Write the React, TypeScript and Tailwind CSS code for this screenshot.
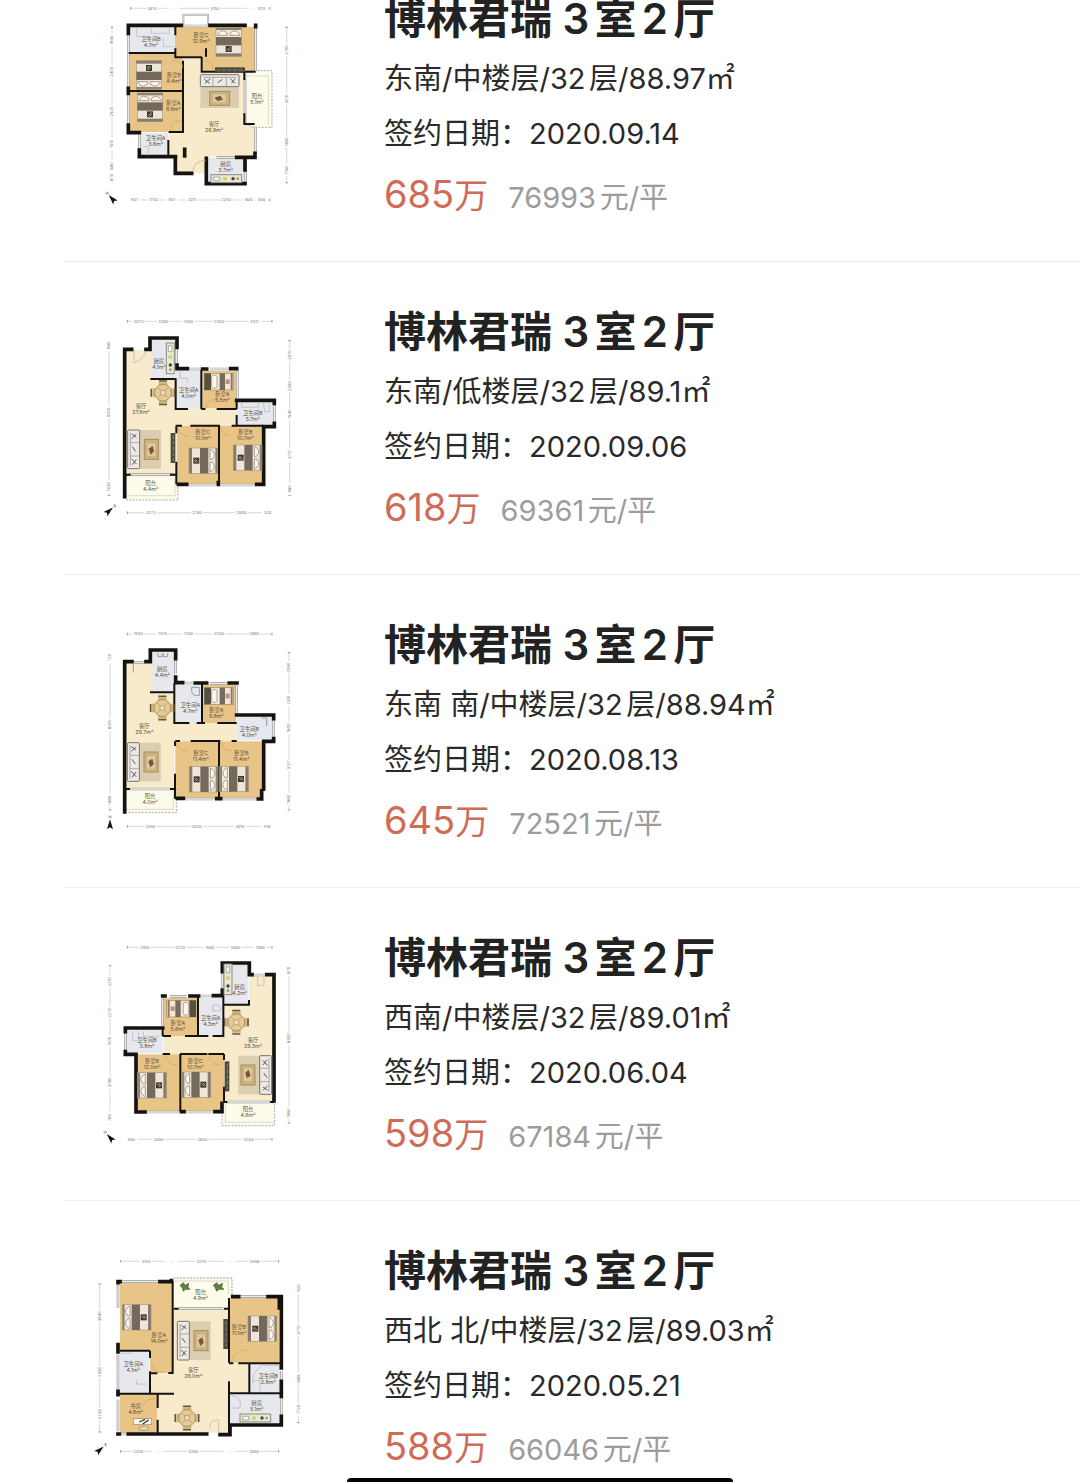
import type { ReactNode } from "react"

type Point = [number, number]

const WOOD = "#e8c487"
const CREAM = "#f8ebcb"
const TILE = "#e6e8ee"
const BALCONY = "#fdfcea"
const WALL = "#15130f"

function Area({ points, fill }: { points: string; fill: string }) {
  return <polygon points={points} fill={fill} />
}

function Walls({ thick, thin, windows }: { thick: string; thin: string; windows: string }) {
  return (
    <g fill="none">
      <path d={windows} stroke="#9a9a98" strokeWidth="8" />
      <path d={windows} stroke="#e9e9ec" strokeWidth="4" />
      <path d={thin} stroke={WALL} strokeWidth="6" />
      <path d={thick} stroke={WALL} strokeWidth="11" strokeLinecap="square" />
    </g>
  )
}

// head of the bed points up at rotate 0
function Bed({ at, rotate = 0 }: { at: Point; rotate?: number }) {
  return (
    <g transform={`translate(${at[0]} ${at[1]}) rotate(${rotate})`}>
      <rect x="-38" y="-43" width="76" height="86" fill="#efe6da" stroke="#a89878" strokeWidth="2" />
      <path d="M-38 -43H38V-36H-38Z" fill="#8d8371" />
      <path d="M-32 -24Q-20 -42 -4 -26L-4 -20H-34ZM32 -24Q20 -42 4 -26L4 -20H34Z" fill="#fbf8f2" stroke="#7d7464" strokeWidth="2" />
      <rect x="-38" y="-15" width="76" height="25" fill="#75695c" />
      <rect x="-38" y="34" width="76" height="9" fill="#887c6d" />
      <rect x="-9" y="12" width="18" height="18" fill="#3b3631" />
      <path d="M-5 24L5 15M-2 27L6 21" stroke="#e8dfd4" strokeWidth="2" />
    </g>
  )
}

function SingleBed({ at, rotate = 0 }: { at: Point; rotate?: number }) {
  return (
    <g transform={`translate(${at[0]} ${at[1]}) rotate(${rotate})`}>
      <rect x="-25" y="-44" width="50" height="88" fill="#f0e6da" stroke="#a08c68" strokeWidth="2" />
      <rect x="-25" y="-44" width="50" height="20" fill="#57503f" />
      <rect x="-19" y="-22" width="38" height="16" rx="5" fill="#fbf7ef" stroke="#8f8573" strokeWidth="2" />
      <rect x="-25" y="2" width="50" height="16" fill="#77695c" />
      <rect x="-7" y="20" width="14" height="12" fill="#b98f80" />
      <rect x="-25" y="35" width="50" height="6" fill="#8d7a64" />
    </g>
  )
}

// sofa with rug and coffee table; sofa sits on the left at rotate 0
function Lounge({ at, rotate = 0 }: { at: Point; rotate?: number }) {
  return (
    <g transform={`translate(${at[0]} ${at[1]}) rotate(${rotate})`}>
      <rect x="-40" y="-58" width="90" height="116" fill="#dacdb0" />
      <rect x="-50" y="-58" width="36" height="116" rx="3" fill="#ece9e6" stroke="#77736c" strokeWidth="3" />
      <path d="M-42 -50V50M-42 -20H-16M-42 20H-16" stroke="#8d8983" strokeWidth="2" />
      <path d="M-38 -46L-24 -36M-24 -46L-38 -32M-36 -8L-26 6M-38 28L-24 44M-24 30L-36 46" stroke="#5d5a56" strokeWidth="3" />
      <rect x="0" y="-30" width="42" height="60" fill="#cbb27f" stroke="#a78d5c" strokeWidth="3" />
      <rect x="9" y="-18" width="24" height="38" fill="#dcc9a3" />
      <path d="M13 -2L25 -10L29 6L19 16Z" fill="#7b5237" />
    </g>
  )
}

function Dining({ at }: { at: Point }) {
  return (
    <g transform={`translate(${at[0]} ${at[1]})`}>
      <path d="M-12 -35H12M-12 35H12M-35 -12V12M35 -12V12" stroke="#5f5440" strokeWidth="5" />
      <path d="M-13 -27H13M-13 27H13M-27 -13V13M27 -13V13" stroke="#cfb27c" strokeWidth="9" />
      <circle r="25" fill="#e6cb98" stroke="#b2945d" strokeWidth="3" />
      <path d="M-15 -15L15 15M15 -15L-15 15" stroke="#a98f60" strokeWidth="2" />
      <circle r="8" fill="#efdcb4" stroke="#a98b57" strokeWidth="2" />
    </g>
  )
}

function Stove({ at, rotate = 0 }: { at: Point; rotate?: number }) {
  return (
    <g transform={`translate(${at[0]} ${at[1]}) rotate(${rotate})`}>
      <rect x="-46" y="-12" width="92" height="24" fill="#e9e8d2" stroke="#8b8b80" strokeWidth="3" />
      <path d="M-38 -5H-20V6H-38Z" fill="#f7f7f2" stroke="#8b8b80" strokeWidth="2" />
      <circle cx="-4" cy="0" r="6" fill="#d3cf6a" />
      <circle cx="20" cy="0" r="5" fill="#3f4437" />
      <circle cx="34" cy="0" r="4" fill="#94978a" />
    </g>
  )
}

function Tv({ at, rotate = 0 }: { at: Point; rotate?: number }) {
  return (
    <g transform={`translate(${at[0]} ${at[1]}) rotate(${rotate})`}>
      <rect x="-7" y="-45" width="14" height="90" fill="#4b493d" />
      <path d="M1 -38V38" stroke="#8b8877" strokeWidth="3" strokeDasharray="12 5" />
    </g>
  )
}

function Label({ at, name, size }: { at: Point; name: string; size: string }) {
  return (
    <text textAnchor="middle" fontSize="16" fill="#5a5040">
      <tspan x={at[0]} y={at[1]}>{name}</tspan>
      <tspan x={at[0]} y={at[1] + 18}>{size}</tspan>
    </text>
  )
}

function Dimensions({ y, from, to, marks }: { y: number; from: number; to: number; marks: [number, string][] }) {
  return (
    <g>
      <path d={`M${from} ${y}H${to}`} stroke="#c4c4c4" strokeWidth="2" />
      <path d={`M${from} ${y - 4}V${y + 4}M${to} ${y - 4}V${y + 4}`} stroke="#999" strokeWidth="3" />
      {marks.map(([x, label]) => (
        <g key={x}>
          <rect x={x - 18} y={y - 6} width="36" height="12" fill="#fff" />
          <text x={x} y={y + 4} textAnchor="middle" fontSize="12" fill="#777">{label}</text>
        </g>
      ))}
    </g>
  )
}

function SideDimensions({ x, from, to, marks }: { x: number; from: number; to: number; marks: [number, string][] }) {
  return (
    <g transform={`translate(${x} 0) rotate(-90)`}>
      <Dimensions y={0} from={-to} to={-from} marks={marks.map(([y, label]) => [-y, label])} />
    </g>
  )
}

// arrow points up at rotate 0
function Compass({ at, rotate }: { at: Point; rotate: number }) {
  return (
    <g transform={`translate(${at[0]} ${at[1]}) rotate(${rotate})`}>
      <path d="M0 -16L9 14L0 8L-9 14Z" fill={WALL} />
      <path d="M-3 -20V-27L3 -20V-27" stroke="#777" strokeWidth="2" fill="none" />
    </g>
  )
}

function Plan({ title, top, children }: { title: string; top: number; children: ReactNode }) {
  return (
    <svg
      role="img"
      aria-label={title}
      viewBox={`0 ${top} 660 660`}
      className="mt-12 h-[220px] w-[220px] shrink-0 [text-autospace:no-autospace]"
    >
      {children}
    </svg>
  )
}

function PlanA() {
  return (
    <Plan title="户型图" top={-9}>
      <Area points="240,172 335,172 335,218 465,218 465,372 497,378 497,470 350,470 350,520 258,520 258,470 235,470" fill={CREAM} />
      <Area points="255,80 497,80 497,215 337,215 337,170 255,170" fill={WOOD} />
      <Area points="116,162 278,162 278,396 116,396" fill={WOOD} />
      <Area points="118,80 255,80 255,157 118,157" fill={TILE} />
      <Area points="148,398 234,398 234,468 148,468" fill={TILE} />
      <Area points="355,473 467,473 467,550 355,550" fill={TILE} />
      <path d="M467 218V212H546V382H490L467 372Z" fill={BALCONY} stroke="#aaa" strokeWidth="3" strokeDasharray="6 4" />
      <path d="M467 228H535V374" fill="none" stroke="#c9c9c3" strokeWidth="2" />
      <path d="M280 76V44H354V76" fill="none" stroke="#aaa" strokeWidth="6" />
      <path d="M280 76V44H354V76" fill="none" stroke="#eee" strokeWidth="2" />
      <Walls
        windows="M280 78H354M116 90V380M497 82V212M465 235V368M496 380V460M148 405V465M467 480V550M380 472H440"
        thin="M116 159H256M256 76V106M256 145V172H335M348 145V170M332 215H497M335 170V215M279 182V272M116 273H282M279 273V396M116 396H150M236 396H282M235 420V468M232 470H262M463 218V240M463 340V372H494"
        thick="M115 76H274M360 76H465M115 76V100M115 265V280M115 375V398H148M148 450V470H256V520H305M284 448V468M349 475V551H465M440 472H495V460M465 475V510M497 76V80"
      />
      <path d="M184 82V100H238V82M140 82V110H156M220 115V140H250M160 440H175V466" fill="none" stroke="#b3b6bf" strokeWidth="2" />
      <path d="M245 182Q280 180 278 205M345 180Q370 185 370 212M240 392Q245 360 275 362M308 512Q315 480 348 482" fill="none" stroke="#d0a35c" strokeWidth="2" />
      <Bed at={[416, 126]} />
      <Bed at={[177, 225]} rotate={180} />
      <Bed at={[180, 322]} />
      <Lounge at={[389, 274]} rotate={90} />
      <Tv at={[420, 209]} rotate={90} />
      <Stove at={[409, 536]} />
      <Label at={[183, 122]} name="卫生间B" size="4.7m²" />
      <Label at={[333, 112]} name="卧室C" size="12.9m²" />
      <Label at={[252, 232]} name="卧室B" size="8.4m²" />
      <Label at={[250, 314]} name="卧室A" size="8.6m²" />
      <Label at={[197, 421]} name="卫生间A" size="3.6m²" />
      <Label at={[372, 379]} name="客厅" size="26.9m²" />
      <Label at={[501, 293]} name="阳台" size="5.1m²" />
      <Label at={[407, 497]} name="厨房" size="3.7m²" />
      <Dimensions y={25} from={122} to={540} marks={[[186, "2870"], [250, "··"], [375, "5150"], [490, "··"], [515, "970"]]} />
      <Dimensions y={600} from={122} to={540} marks={[[133, "607"], [190, "1750"], [246, "957"], [306, "2011"], [408, "2250"], [476, "800"], [515, "850"]]} />
      <SideDimensions x={66} from={82} to={548} marks={[[120, "1640"], [215, "2400"], [335, "2520"], [432, "1510"], [498, "880"], [532, "870"]]} />
      <SideDimensions x={590} from={82} to={548} marks={[[150, "2700"], [297, "3210"], [425, "1850"], [510, "1180"]]} />
      <Compass at={[67, 597]} rotate={-42} />
    </Plan>
  )
}

function PlanB() {
  return (
    <Plan title="户型图" top={0}>
      <Area points="108,120 183,120 183,208 257,208 257,295 440,295 440,348 257,348 257,493 108,493" fill={CREAM} />
      <Area points="260,348 520,348 520,523 260,523" fill={WOOD} />
      <Area points="337,182 438,182 438,295 337,295" fill={WOOD} />
      <Area points="183,88 257,88 257,206 183,206" fill={TILE} />
      <Area points="258,180 334,180 334,295 258,295" fill={TILE} />
      <Area points="440,272 550,272 550,345 440,345" fill={TILE} />
      <path d="M108 497H264V570H108Z" fill={BALCONY} stroke="#aaa" strokeWidth="3" strokeDasharray="6 4" />
      <path d="M110 557H255V500" fill="none" stroke="#c9c9c3" strokeWidth="2" />
      <Walls
        windows="M260 115V165M296 177H334M442 180V265M553 280V340M295 525H378M392 525H495M115 494H250M360 177H415"
        thin="M181 207H257M257 205V297H294M334 180V297M334 297H346M380 297H440M440 270V297M257 347H276M301 347H390M425 347H440M259 348V370M259 455V523M387 347V523M108 494H122M240 494H257M437 347H520M440 315V345"
        thick="M104 560V118H125M168 118H180V84H261V112M261 165V176H292M338 177H350M422 176H440M440 271H553V280M553 340V350H521V523H500M385 523V518M265 523H290"
      />
      <path d="M132 120V158Q158 152 168 124M270 182V205H292V218M455 276V292H505V276M520 278H538V305H524Z" fill="none" stroke="#aeb0b6" strokeWidth="2" />
      <path d="M262 350Q268 378 298 378M392 350Q396 378 424 378M348 296Q350 270 376 268" fill="none" stroke="#d0a35c" strokeWidth="2" />
      <Dining at={[219, 248]} />
      <SingleBed at={[387, 215]} rotate={-90} />
      <Bed at={[340, 452]} rotate={90} />
      <Bed at={[473, 443]} rotate={90} />
      <Lounge at={[163, 418]} />
      <Tv at={[249, 414]} />
      <Stove at={[241, 145]} rotate={90} />
      <Label at={[207, 160]} name="厨房" size="4.1m²" />
      <Label at={[296, 246]} name="卫生间A" size="4.0m²" />
      <Label at={[397, 259]} name="卧室A" size="5.5m²" />
      <Label at={[488, 315]} name="卫生间B" size="3.7m²" />
      <Label at={[153, 295]} name="客厅" size="27.6m²" />
      <Label at={[338, 372]} name="卧室C" size="10.1m²" />
      <Label at={[466, 372]} name="卧室B" size="10.7m²" />
      <Label at={[182, 525]} name="阳台" size="4.4m²" />
      <Dimensions y={34} from={112} to={546} marks={[[146, "2073"], [220, "2385"], [296, "1600"], [387, "2350"], [494, "2617"]]} />
      <Dimensions y={608} from={112} to={546} marks={[[182, "3273"], [321, "2790"], [454, "2800"], [533, "520"]]} />
      <SideDimensions x={57} from={92} to={556} marks={[[106, "680"], [307, "6100"], [530, "1430"]]} />
      <SideDimensions x={599} from={92} to={556} marks={[[135, "2070"], [228, "2350"], [312, "1540"], [434, "3710"], [537, "480"]]} />
      <Compass at={[57, 603]} rotate={48} />
    </Plan>
  )
}

function PlanC() {
  return (
    <Plan title="户型图" top={3}>
      <Area points="108,122 183,122 183,212 253,212 253,303 440,303 440,357 253,357 253,500 108,500" fill={CREAM} />
      <Area points="256,358 518,358 518,530 256,530" fill={WOOD} />
      <Area points="339,188 438,188 438,303 339,303" fill={WOOD} />
      <Area points="183,88 255,88 255,210 183,210" fill={TILE} />
      <Area points="256,188 336,188 336,303 256,303" fill={TILE} />
      <Area points="440,282 550,282 550,355 440,355" fill={TILE} />
      <path d="M108 503H260V572H108Z" fill={BALCONY} stroke="#aaa" strokeWidth="3" strokeDasharray="6 4" />
      <path d="M110 562H250V505" fill="none" stroke="#c9c9c3" strokeWidth="2" />
      <Walls
        windows="M257 115V155M284 183H312M440 190V272M551 290V350M286 531H370M398 531H500M120 501H245M132 122H164M360 184H415"
        thin="M180 211H253M253 184V303H298M336 184V303M320 303H345M382 303H440M256 357H270M302 357H391M425 357H440M255 358V372M255 455V530M387 357V528M108 501H120M240 501H255"
        thick="M104 570V119H126M168 119H181V84H257V110M257 165V182H278M316 183H350M418 183H441M440 279H551V290M551 350V358H521V502L515 505V531H505M262 529H280M380 530H392"
      />
      <path d="M130 124V152M305 196H328V220H312L305 210ZM515 288H530V312M204 93V104H216V94M220 93V104H233V94" fill="none" stroke="#989aa2" strokeWidth="3" />
      <path d="M258 360Q264 386 296 386M392 360Q396 386 424 386" fill="none" stroke="#d0a35c" strokeWidth="2" />
      <Dining at={[217, 258]} />
      <SingleBed at={[387, 222]} rotate={-90} />
      <Bed at={[341, 472]} rotate={90} />
      <Bed at={[432, 471]} rotate={-90} />
      <Lounge at={[162, 420]} />
      <Label at={[217, 146]} name="厨房" size="4.4m²" />
      <Label at={[301, 254]} name="卫生间A" size="4.7m²" />
      <Label at={[379, 271]} name="卧室A" size="5.6m²" />
      <Label at={[478, 326]} name="卫生间B" size="4.0m²" />
      <Label at={[163, 317]} name="客厅" size="29.7m²" />
      <Label at={[332, 400]} name="卧室C" size="11.4m²" />
      <Label at={[454, 400]} name="卧室B" size="11.4m²" />
      <Label at={[180, 529]} name="阳台" size="4.0m²" />
      <Dimensions y={36} from={112} to={546} marks={[[145, "1640"], [218, "1570"], [295, "1780"], [387, "2250"], [493, "2890"]]} />
      <Dimensions y={613} from={112} to={546} marks={[[181, "3360"], [320, "3030"], [450, "3015"], [532, "610"]]} />
      <SideDimensions x={60} from={92} to={564} marks={[[106, "720"], [308, "8310"], [535, "1480"]]} />
      <SideDimensions x={597} from={92} to={564} marks={[[137, "2050"], [234, "2351"], [318, "1800"], [430, "3121"], [532, "1480"]]} />
      <Compass at={[60, 608]} rotate={0} />
    </Plan>
  )
}

function PlanD() {
  return (
    <Plan title="户型图" top={3}>
      <Area points="552,122 477,122 477,210 402,210 402,303 220,303 220,357 402,357 402,500 552,500" fill={CREAM} />
      <Area points="142,358 402,358 402,530 142,530" fill={WOOD} />
      <Area points="220,188 322,188 322,303 220,303" fill={WOOD} />
      <Area points="402,88 475,88 475,208 402,208" fill={TILE} />
      <Area points="325,188 400,188 400,303 325,303" fill={TILE} />
      <Area points="108,284 218,284 218,355 108,355" fill={TILE} />
      <path d="M396 503H554V572H396Z" fill={BALCONY} stroke="#aaa" strokeWidth="3" strokeDasharray="6 4" />
      <path d="M550 562H406V505" fill="none" stroke="#c9c9c3" strokeWidth="2" />
      <Walls
        windows="M398 115V160M333 183H362M217 190V272M106 290V350M170 531H270M286 531H370M412 501H540M490 120H522M240 184H290"
        thin="M400 209H477M477 195V212M400 184V303H368M324 184V303M285 303H355M218 303H243M218 303V280M218 357H240M355 357H402M270 357H352M402 357V375M271 357V530M402 455V500M402 501H412M540 501H552"
        thick="M552 498V119H530M486 119H478V84H397V110M397 165V182H370M326 183H300M225 183H218M218 279H106V290M106 350V358H138V500V531H165M275 530H282M375 530H396V505"
      />
      <path d="M503 124V152H522V124M368 210H384L392 222V228H368ZM128 290V316H145V290M160 288V304H208" fill="none" stroke="#aeb0b6" strokeWidth="2" />
      <path d="M226 360Q228 388 262 390M358 362Q360 388 392 390" fill="none" stroke="#d0a35c" strokeWidth="2" />
      <Dining at={[439, 262]} />
      <SingleBed at={[274, 221]} rotate={90} />
      <Bed at={[186, 451]} rotate={-90} />
      <Bed at={[319, 449]} rotate={-90} />
      <Lounge at={[495, 420]} rotate={180} />
      <Tv at={[411, 424]} />
      <Stove at={[414, 133]} rotate={90} />
      <Label at={[449, 161]} name="厨房" size="4.2m²" />
      <Label at={[362, 254]} name="卫生间A" size="4.3m²" />
      <Label at={[264, 271]} name="卧室A" size="5.6m²" />
      <Label at={[171, 321]} name="卫生间B" size="3.8m²" />
      <Label at={[489, 322]} name="客厅" size="29.3m²" />
      <Label at={[186, 384]} name="卧室B" size="12.0m²" />
      <Label at={[316, 384]} name="卧室C" size="10.7m²" />
      <Label at={[474, 529]} name="阳台" size="4.6m²" />
      <Dimensions y={37} from={112} to={546} marks={[[165, "2910"], [271, "2270"], [360, "1680"], [436, "1480"], [511, "1690"]]} />
      <Dimensions y={613} from={112} to={546} marks={[[124, "560"], [206, "2850"], [337, "2850"], [475, "3200"]]} />
      <SideDimensions x={60} from={92} to={564} marks={[[140, "2210"], [233, "2270"], [318, "1570"], [442, "3760"], [548, "760"]]} />
      <SideDimensions x={597} from={92} to={564} marks={[[106, "670"], [310, "8300"], [534, "1480"]]} />
      <Compass at={[61, 609]} rotate={-42} />
    </Plan>
  )
}

function PlanE() {
  return (
    <Plan title="户型图" top={3}>
      <Area points="180,180 418,180 418,345 480,345 480,435 418,435 418,555 204,555 204,438 180,438" fill={CREAM} />
      <Area points="90,103 247,103 247,375 180,375 180,308 90,308" fill={WOOD} />
      <Area points="418,150 567,150 567,344 418,344" fill={WOOD} />
      <Area points="90,438 202,438 202,556 90,556" fill={WOOD} />
      <Area points="90,310 178,310 178,435 90,435" fill={TILE} />
      <Area points="480,348 570,348 570,432 480,432" fill={TILE} />
      <Area points="420,438 572,438 572,528 420,528" fill={TILE} />
      <path d="M250 90H426V140L414 180H250Z" fill={BALCONY} />
      <path d="M250 90H426V140" fill="none" stroke="#999" strokeWidth="3" strokeDasharray="6 4" />
      <path d="M254 99H415V140" fill="none" stroke="#c9c9c3" strokeWidth="2" />
      <Walls
        windows="M94 101H206M84 110V180M84 320V440M84 455V550M450 146H530M574 370V395M574 450V500M266 182H400M92 558H112"
        thin="M248 98V375H235M90 308H180M180 308V330M180 370V435M180 376H202M84 437H252M203 437V480M203 515V556M252 182H266M402 182H418M417 150V344M417 346H430M445 346H572M478 348V434M417 400V555M417 436H572"
        thick="M84 101H90M210 101H244V98M84 101V104M84 290V312M84 430V440M84 558H88M115 558H350M390 560H420V531H574V505M428 146H446M534 146H574V360M568 150V180M574 400V445"
      />
      <path d="M140 395V408H170M92 316H125M490 410Q480 380 515 352H565M490 398H510V430M424 442Q458 448 450 480H422M360 540Q355 515 386 516V556" fill="none" stroke="#aeb0b6" strokeWidth="2" />
      <path d="M160 474Q165 450 200 452M184 340Q188 375 220 372M425 340Q428 310 470 305" fill="none" stroke="#d0a35c" strokeWidth="2" />
      <g fill="#64803f" stroke="#465e2a" strokeWidth="2">
        <path d="M270 112L280 104L286 112L296 106L294 118L300 124L286 124L280 130L277 120Z" />
        <path d="M370 112L380 104L386 112L398 106L395 118L402 124L387 124L380 130L376 120Z" />
      </g>
      <Bed at={[140, 208]} rotate={-90} />
      <Bed at={[517, 242]} rotate={90} />
      <Lounge at={[312, 278]} />
      <Tv at={[407, 258]} />
      <Dining at={[291, 510]} />
      <Stove at={[496, 510]} />
      <g>
        <rect x="130" y="512" width="55" height="18" fill="#f7f4ec" stroke="#9a8a66" strokeWidth="2" />
        <path d="M148 522L165 514M158 528L176 516" stroke="#3d3a35" strokeWidth="4" />
        <rect x="148" y="535" width="26" height="12" rx="4" fill="#ddd3bd" stroke="#9a8a66" strokeWidth="2" />
      </g>
      <Label at={[332, 137]} name="阳台" size="4.9m²" />
      <Label at={[207, 267]} name="卧室A" size="14.0m²" />
      <Label at={[447, 242]} name="卧室B" size="11.1m²" />
      <Label at={[130, 354]} name="卫生间A" size="4.1m²" />
      <Label at={[310, 371]} name="客厅" size="26.0m²" />
      <Label at={[535, 391]} name="卫生间B" size="2.8m²" />
      <Label at={[137, 480]} name="书房" size="4.8m²" />
      <Label at={[500, 472]} name="厨房" size="5.1m²" />
      <Dimensions y={40} from={92} to={566} marks={[[168, "3134"], [245, "··"], [333, "3270"], [418, "··"], [494, "2658"]]} />
      <Dimensions y={610} from={92} to={566} marks={[[145, "2200"], [203, "··"], [310, "4285"], [418, "··"], [492, "2860"]]} />
      <SideDimensions x={29} from={108} to={552} marks={[[205, "3940"], [372, "2430"], [498, "2230"]]} />
      <SideDimensions x={625} from={104} to={524} marks={[[120, "920"], [246, "3770"], [393, "1685"], [484, "1729"]]} />
      <Compass at={[29, 606]} rotate={48} />
    </Plan>
  )
}

interface Deal {
  plan: ReactNode
  info: string
  date: string
  total: string
  unit: string
}

const deals: Deal[] = [
  { plan: <PlanA />, info: "东南/中楼层/32层/88.97㎡", date: "2020.09.14", total: "685", unit: "76993元/平" },
  { plan: <PlanB />, info: "东南/低楼层/32层/89.1㎡", date: "2020.09.06", total: "618", unit: "69361元/平" },
  { plan: <PlanC />, info: "东南 南/中楼层/32层/88.94㎡", date: "2020.08.13", total: "645", unit: "72521元/平" },
  { plan: <PlanD />, info: "西南/中楼层/32层/89.01㎡", date: "2020.06.04", total: "598", unit: "67184元/平" },
  { plan: <PlanE />, info: "西北 北/中楼层/32层/89.03㎡", date: "2020.05.21", total: "588", unit: "66046元/平" },
]

function DealRow({ deal }: { deal: Deal }) {
  return (
    <li className="ml-16 flex gap-[74px] border-b border-[#eeeeee] pl-[26px]">
      {deal.plan}
      <div className="min-w-0 flex-1 whitespace-nowrap pt-[46px] pb-10">
        <h2 className="mb-2 text-[42px] leading-[48px] font-semibold text-[#222222]">博林君瑞 3室2厅</h2>
        <p className="text-[29px] leading-[55px] text-[#2a2a2a]">{deal.info}</p>
        <p className="text-[29px] leading-[55px] text-[#2a2a2a]">签约日期：{deal.date}</p>
        <p className="mt-2 flex h-[52px] items-baseline gap-5 leading-[50px]">
          <span className="text-[38px] text-[#cf6b56] [text-autospace:no-autospace]">
            {deal.total}
            <span className="text-[34px]">万</span>
          </span>
          <span className="text-[29px] text-[#9c9c9c]">{deal.unit}</span>
        </p>
      </div>
    </li>
  )
}

export default function App() {
  return (
    <main className="h-screen overflow-hidden bg-white font-['Inter','Noto_Sans_CJK_SC',sans-serif] [text-autospace:normal]">
      <ul className="-mt-[51px]">
        {deals.map((deal) => (
          <DealRow key={deal.date} deal={deal} />
        ))}
      </ul>
      <div className="fixed inset-x-0 bottom-0 flex justify-center">
        <div className="h-1 w-[386px] rounded-t-lg bg-black" />
      </div>
    </main>
  )
}
